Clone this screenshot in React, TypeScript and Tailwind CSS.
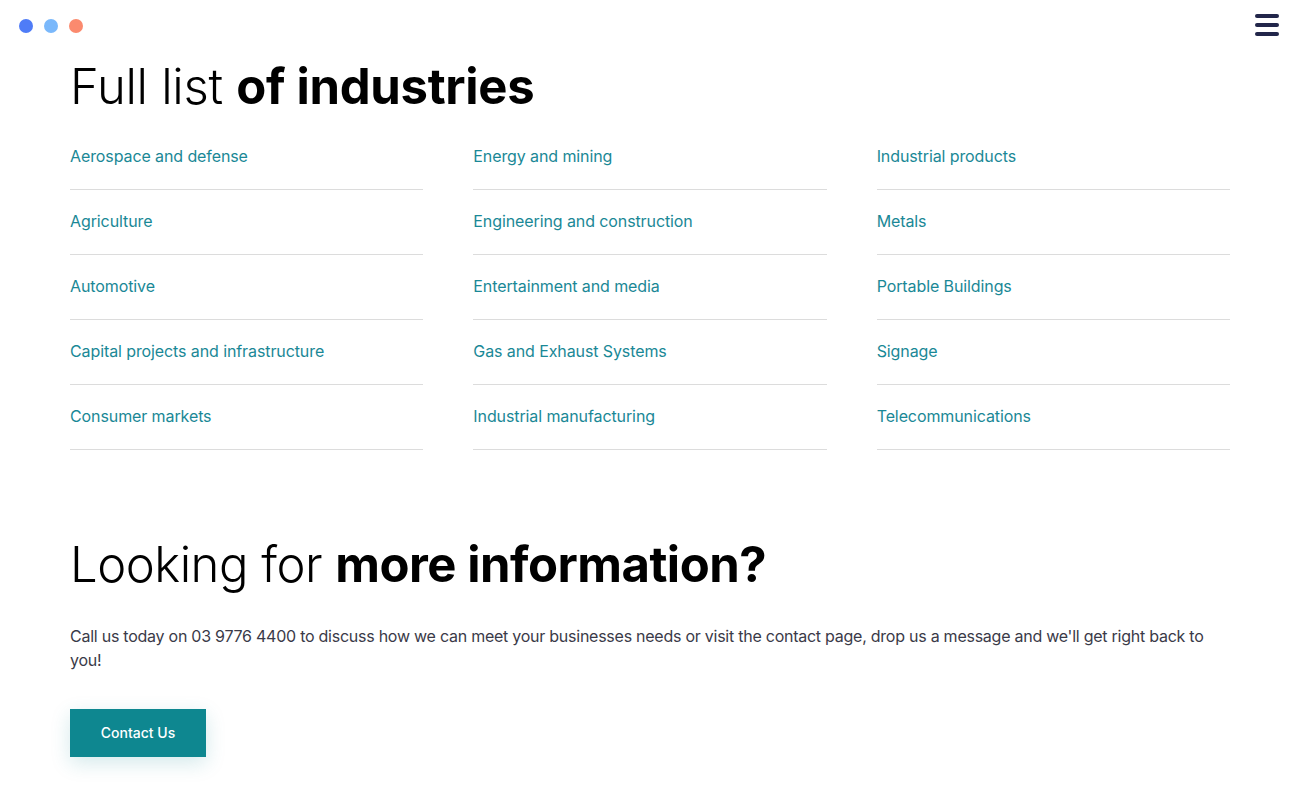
import React from "react";

const cols = [
  ["Aerospace and defense", "Agriculture", "Automotive", "Capital projects and infrastructure", "Consumer markets"],
  ["Energy and mining", "Engineering and construction", "Entertainment and media", "Gas and Exhaust Systems", "Industrial manufacturing"],
  ["Industrial products", "Metals", "Portable Buildings", "Signage", "Telecommunications"],
];

export default function App() {
  return (
    <div className="relative min-h-[789px] w-full bg-white" style={{ fontFamily: "Inter, 'Noto Sans', sans-serif" }}>
      <div className="flex items-center justify-between px-[19px] pt-[16px]">
        <div className="flex gap-[11px]">
          <span className="block h-[14px] w-[14px] rounded-full bg-[#4f7cf7]" />
          <span className="block h-[14px] w-[14px] rounded-full bg-[#7ab8fb]" />
          <span className="block h-[14px] w-[14px] rounded-full bg-[#fb8a6e]" />
        </div>
        <div className="flex -mt-[2px] flex-col gap-[5px] pr-[2px]">
          <span className="block h-[4px] w-[24px] rounded-full bg-[#22264a]" />
          <span className="block h-[4px] w-[24px] rounded-full bg-[#22264a]" />
          <span className="block h-[4px] w-[24px] rounded-full bg-[#22264a]" />
        </div>
      </div>
      <div className="px-[70px]">
        <h1 className="mt-[21px] text-[49px] leading-[60px] tracking-[-0.3px] text-black">
          <span className="font-light">Full list </span>
          <span className="font-bold">of industries</span>
        </h1>
        <div className="mt-[8px] grid grid-cols-3 gap-x-[50px]">
          {cols.map((c, i) => (
            <div key={i} className="flex flex-col">
              {c.map((t) => (
                <div key={t} className="h-[65px] border-b border-[#dcdcdc] pt-[19px] text-[16px] leading-[24px] tracking-[-0.1px] text-[#1a8896]">
                  {t}
                </div>
              ))}
            </div>
          ))}
        </div>
        <h2 className="mt-[85px] text-[49px] leading-[60px] tracking-[-0.5px] text-black">
          <span className="font-light">Looking for </span>
          <span className="font-bold">more information?</span>
        </h2>
        <p className="mt-[29px] text-[16px] leading-[24px] tracking-[-0.25px] text-[#3a3a48]">
          Call us today on 03 9776 4400 to discuss how we can meet your businesses needs or visit the contact page, drop us a message and we'll get right back to you!
        </p>
        <button className="mt-[37px] h-[48px] w-[136px] bg-[#0e8790] pb-[2px] text-[14px] font-medium text-white shadow-[0_6px_20px_rgba(14,135,144,0.18)]">
          Contact Us
        </button>
      </div>
    </div>
  );
}
